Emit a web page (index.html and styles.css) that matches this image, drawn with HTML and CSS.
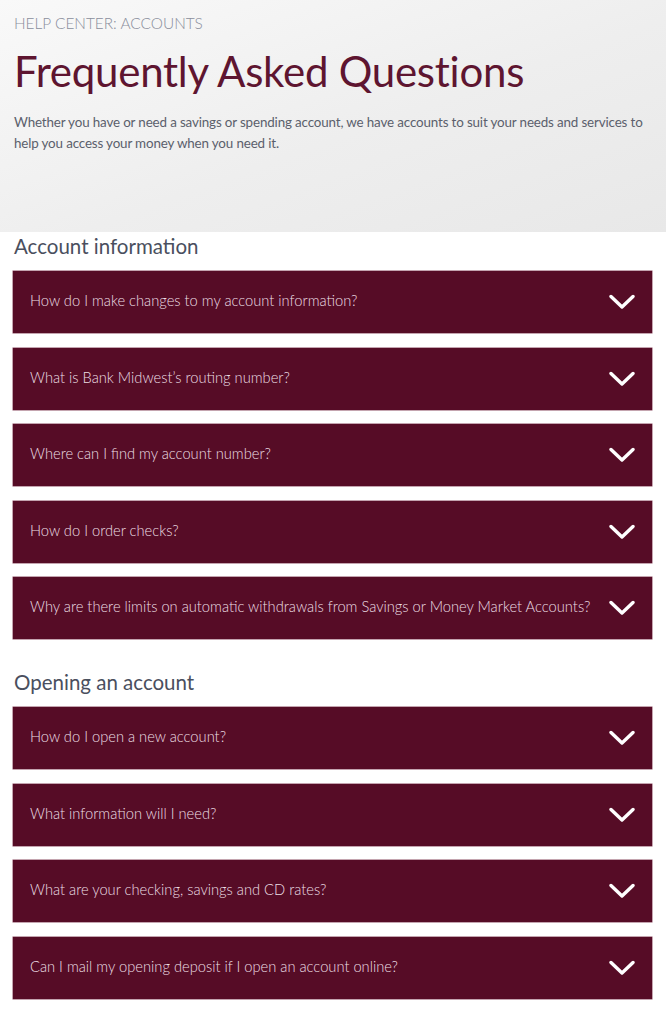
FILE: index.html
```html
<!DOCTYPE html>
<html lang="en">
<head>
<meta charset="utf-8">
<title>Help Center: Accounts - FAQ</title>
<link rel="stylesheet" href="styles.css">
</head>
<body>
<header class="hero">
  <p class="eyebrow">HELP CENTER: ACCOUNTS</p>
  <h1 class="title">Frequently Asked Questions</h1>
  <p class="intro">Whether you have or need a savings or spending account, we have accounts to suit your needs and services to help you access your money when you need it.</p>
</header>
<main class="content">
  <section class="group">
    <h2 class="group-title">Account information</h2>
    <ul class="faq">
      <li class="item"><span class="q">How do I make changes to my account information?</span><svg class="chev" viewBox="0 0 26 16"><path d="M2 2.5 L13 13 L24 2.5"/></svg></li>
      <li class="item"><span class="q">What is Bank Midwest’s routing number?</span><svg class="chev" viewBox="0 0 26 16"><path d="M2 2.5 L13 13 L24 2.5"/></svg></li>
      <li class="item"><span class="q">Where can I find my account number?</span><svg class="chev" viewBox="0 0 26 16"><path d="M2 2.5 L13 13 L24 2.5"/></svg></li>
      <li class="item"><span class="q">How do I order checks?</span><svg class="chev" viewBox="0 0 26 16"><path d="M2 2.5 L13 13 L24 2.5"/></svg></li>
      <li class="item"><span class="q">Why are there limits on automatic withdrawals from Savings or Money Market Accounts?</span><svg class="chev" viewBox="0 0 26 16"><path d="M2 2.5 L13 13 L24 2.5"/></svg></li>
    </ul>
  </section>
  <section class="group">
    <h2 class="group-title">Opening an account</h2>
    <ul class="faq">
      <li class="item"><span class="q">How do I open a new account?</span><svg class="chev" viewBox="0 0 26 16"><path d="M2 2.5 L13 13 L24 2.5"/></svg></li>
      <li class="item"><span class="q">What information will I need?</span><svg class="chev" viewBox="0 0 26 16"><path d="M2 2.5 L13 13 L24 2.5"/></svg></li>
      <li class="item"><span class="q">What are your checking, savings and CD rates?</span><svg class="chev" viewBox="0 0 26 16"><path d="M2 2.5 L13 13 L24 2.5"/></svg></li>
      <li class="item"><span class="q">Can I mail my opening deposit if I open an account online?</span><svg class="chev" viewBox="0 0 26 16"><path d="M2 2.5 L13 13 L24 2.5"/></svg></li>
    </ul>
  </section>
</main>
</body>
</html>
```
FILE: styles.css
```css
* { box-sizing: border-box; }
html, body { margin: 0; padding: 0; background: #fff; }
body { font-family: Lato, "Open Sans", sans-serif; }

.hero {
  height: 232px;
  padding: 13px 14px 0 14px;
  background: linear-gradient(160deg, #f9f9f9 0%, #eeeeee 55%, #e8e8e8 100%);
}
.eyebrow {
  margin: 0;
  font-size: 15.4px;
  line-height: 20px;
  font-weight: 300;
  color: #8a8e9c;
}
.title {
  margin: 13px 0 0 0;
  font-size: 42px;
  line-height: 50px;
  font-weight: 400;
  letter-spacing: -0.25px;
  color: #5e1530;
}
.intro {
  margin: 16px 0 0 0;
  font-size: 13.4px;
  line-height: 21px;
  font-weight: 400;
  letter-spacing: -0.15px;
  color: #5b5f6c;
}

.content { padding: 0 14px 0 13px; }
.group-title {
  margin: 0;
  padding: 0 1px;
  font-size: 20.5px;
  line-height: 28px;
  font-weight: 400;
  color: #4a4f5e;
}
.faq { list-style: none; margin: 11px 0 0 0; padding: 0; }
.item {
  display: flex;
  align-items: center;
  justify-content: space-between;
  height: 62px;
  margin-bottom: 14.5px;
  padding: 0 17px 0 17px;
  background: #560c26;
  box-shadow: 0 0 0 0.5px #8a4a60;
}
.q {
  font-size: 14.7px;
  font-weight: 300;
  color: #ecdfe4;
  padding-bottom: 4px;
}
.chev { width: 26px; height: 16px; flex: none; }
.chev path { fill: none; stroke: #fff; stroke-width: 3.4; stroke-linecap: round; stroke-linejoin: round; }
.group + .group { margin-top: 29px; }
```
